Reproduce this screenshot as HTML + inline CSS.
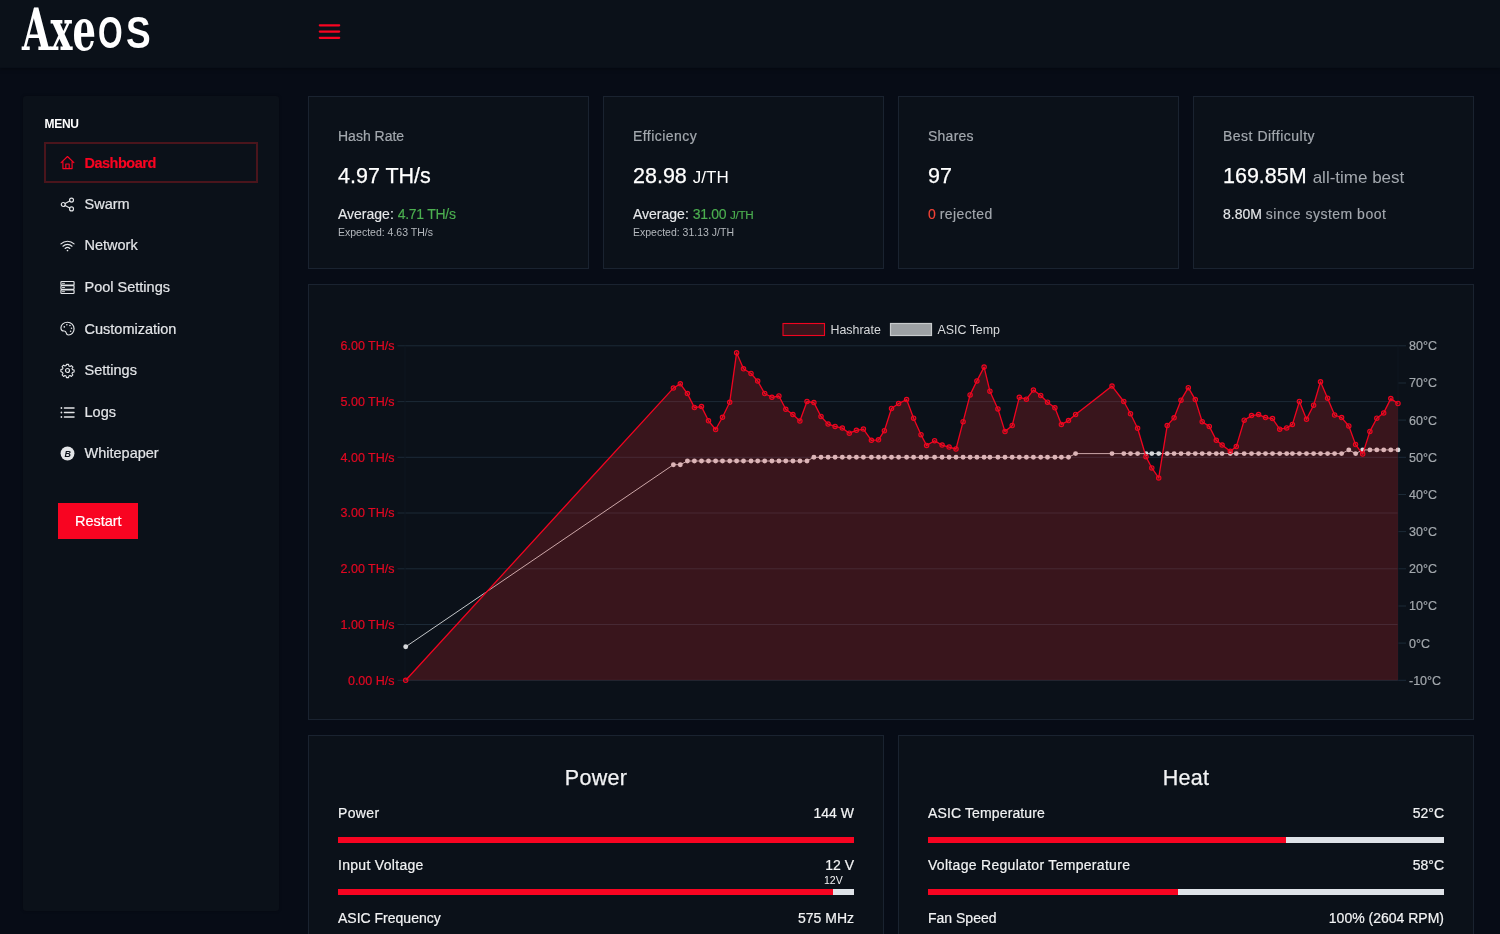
<!DOCTYPE html>
<html lang="en">
<head>
<meta charset="utf-8">
<title>AxeOS</title>
<style>
*{box-sizing:border-box;margin:0;padding:0}
html,body{width:1500px;height:934px;overflow:hidden;background:#070c16;color:#e6e8ea;font-family:"Liberation Sans",sans-serif;}
.abs{position:absolute}
#topbar{position:absolute;left:0;top:0;width:1500px;height:67px;background:#0b1119;box-shadow:0 1px 0 #090f18,0 2px 4px rgba(0,0,0,.35)}
#logo{position:absolute;left:0;top:0;width:200px;height:67px;color:#fff;white-space:nowrap}
#logo span{position:absolute;display:block;transform-origin:0 0;line-height:1}
#logo .axe{left:22px;top:1px;font-family:"DejaVu Serif",serif;font-weight:bold;font-size:58px;transform:scaleX(.635)}
#logo .os{left:98px;top:11px;font-family:"Liberation Sans",sans-serif;font-weight:bold;font-size:44px;transform:scaleX(.72)}
#logo .os2{left:126px;transform:scaleX(.84)}
#burger{position:absolute;left:319px;top:24px;width:21.5px;height:16px}
#burger i{position:absolute;left:0;width:21.5px;height:2.3px;background:#f80421;border-radius:1.2px}
#sidebar{position:absolute;left:23px;top:96px;width:256px;height:814.5px;background:#0b1119;border-radius:3px;box-shadow:0 0 3px rgba(0,0,0,.3)}
.menu-title{position:absolute;left:44.5px;top:116.5px;font-size:12px;line-height:14px;font-weight:bold;color:#fff;letter-spacing:-.3px}
.mi{position:absolute;left:84.500px;height:20px;line-height:20px;color:#e3e5e8;font-size:14.500px;white-space:nowrap;-webkit-text-stroke:.2px currentColor}
.mi.act{color:#f80421;font-weight:bold;letter-spacing:-.5px}
.ic{position:absolute;left:60.300px;width:15px;height:15px;margin-top:.5px;color:#e3e5e8;overflow:visible}
.ic.act{color:#f80421}
.actbox{position:absolute;left:44.300px;top:142px;width:213.300px;height:40.800px;border:2.300px solid #4a151c}
.btn{position:absolute;left:58.400px;top:503px;width:79.800px;height:36px;background:#f80421;color:#fff;font-size:14.500px;text-align:center;line-height:36.500px;-webkit-text-stroke:.2px #fff}
.card{position:absolute;background:#0b1119;border:1px solid #1a2330}
.card .t{position:absolute;left:29px;top:31px;font-size:14px;color:#a3a8ae;white-space:nowrap;-webkit-text-stroke:.2px #a3a8ae}
.card .v{position:absolute;left:29px;top:66.500px;font-size:21.500px;color:#fff;white-space:nowrap;-webkit-text-stroke:.25px #fff}
.card .v small{font-size:17px;-webkit-text-stroke:0}
.card .a{position:absolute;left:29px;top:109px;font-size:14px;color:#e6e8ea;white-space:nowrap;-webkit-text-stroke:.15px currentColor}
.card .e{position:absolute;left:29px;top:129px;font-size:10.5px;color:#b4b8bd;white-space:nowrap}
.g{color:#4caf50;letter-spacing:-.27px}.r{color:#f44336}.m{color:#a3a8ae}

.ct{position:absolute;left:0;width:100%;top:30px;text-align:center;font-size:21.500px;color:#f2f3f4;letter-spacing:.3px;-webkit-text-stroke:.25px #f2f3f4}
.row{position:absolute;left:29px;width:516px;font-size:14px;color:#f2f3f4;white-space:nowrap;-webkit-text-stroke:.2px #f2f3f4}
.row b{position:absolute;right:0;top:0;font-weight:normal}
.bar{position:absolute;left:29px;width:516px;height:6px;background:#dfe3e8}
.bar i{position:absolute;left:0;top:0;height:6px;background:#f80421}
.tiny{position:absolute;font-size:10.5px;color:#f2f3f4}
#wrap{position:absolute;left:0;top:0;width:1500px;height:934px;will-change:transform}
</style>
</head>
<body>
<div id="wrap">
<div id="topbar">
  <div id="logo"><span class="axe">Axe</span><span class="os">O</span><span class="os os2">S</span></div>
  <svg id="burger" viewBox="0 0 30 20" style="position:absolute;left:315px;top:20px;width:30px;height:20px"><path d="M4.8 5.35H24.2M4.8 11.6H24.2M4.8 17.85H24.2" stroke="#f80421" stroke-width="2.2" stroke-linecap="round" fill="none"/></svg>
</div>
<div id="sidebar"></div>
<div class="menu-title">MENU</div>
<div class="actbox"></div>
<svg class="ic act" style="top:154.4px" viewBox="0 0 16 16" fill="none" stroke="currentColor" stroke-width="1.250" stroke-linecap="round" stroke-linejoin="round"><path d="M1.2 8.1 8 1.6l6.8 6.5M3.1 6.9v7.6h9.8V6.9M6.2 14.5V9.6h3.6v4.9" /></svg>
<div class="mi act" style="top:152.5px">Dashboard</div>
<svg class="ic" style="top:196.3px" viewBox="0 0 16 16" fill="none" stroke="currentColor" stroke-width="1.250" stroke-linecap="round" stroke-linejoin="round"><circle cx="12.3" cy="3.3" r="2.1"/><circle cx="3.5" cy="8" r="2.1"/><circle cx="12.3" cy="12.7" r="2.1"/><path d="M5.4 7 10.4 4.3M5.4 9l5 2.7"/></svg>
<div class="mi" style="top:193.5px">Swarm</div>
<svg class="ic" style="top:237.5px" viewBox="0 0 16 16" fill="none" stroke="currentColor" stroke-width="1.250" stroke-linecap="round" stroke-linejoin="round"><path d="M1 6.3a10 10 0 0 1 14 0M3.2 8.8a6.9 6.9 0 0 1 9.6 0M5.5 11.2a3.6 3.6 0 0 1 5 0"/><circle cx="8" cy="13.3" r=".9" fill="currentColor" stroke="none"/></svg>
<div class="mi" style="top:235.0px">Network</div>
<svg class="ic" style="top:279.3px" viewBox="0 0 16 16" fill="none" stroke="currentColor" stroke-width="1.250" stroke-linecap="round" stroke-linejoin="round"><rect x="1" y="1.6" width="14" height="3.9" rx=".8"/><rect x="1" y="6.05" width="14" height="3.9" rx=".8"/><rect x="1" y="10.5" width="14" height="3.9" rx=".8"/><path d="M2.6 3.55h2.2M2.6 8h2.2M2.6 12.45h2.2" stroke-width="1"/></svg>
<div class="mi" style="top:277.0px">Pool Settings</div>
<svg class="ic" style="top:320.7px" viewBox="0 0 16 16" fill="none" stroke="currentColor" stroke-width="1.250" stroke-linecap="round" stroke-linejoin="round"><path d="M8 1.3C4 1.3 1 4 1 7.2c0 2.3 1.6 3.5 3.3 3.5 1.5 0 2 .8 2.300 2 .3 1.300 1.200 2.200 2.600 2.200 3.300 0 5.800-3 5.800-6.700C15 4.300 11.900 1.300 8 1.300z"/><g fill="currentColor" stroke="none"><circle cx="4.600" cy="6.300" r=".85"/><circle cx="7.300" cy="4" r=".85"/><circle cx="10.600" cy="4.800" r=".85"/><circle cx="12.300" cy="7.700" r=".85"/><circle cx="11.300" cy="11" r=".85"/></g></svg>
<div class="mi" style="top:318.6px">Customization</div>
<svg class="ic" style="top:362.5px" viewBox="0 0 16 16" fill="none" stroke="currentColor" stroke-width="1.250" stroke-linecap="round" stroke-linejoin="round"><circle cx="8" cy="8" r="2.1"/><path transform="translate(8 8) scale(.93) translate(-8 -8)" d="M6.800 1h2.400l.4 1.900 1.300.55 1.600-1.050 1.700 1.700-1.050 1.600.55 1.300 1.900.4v2.400l-1.900.4-.55 1.300 1.050 1.600-1.700 1.700-1.600-1.050-1.300.55-.4 1.900H6.800l-.4-1.900-1.300-.55-1.600 1.050-1.700-1.700 1.050-1.600-.55-1.300L.4 9.200V6.800l1.900-.4.550-1.300L1.800 3.500l1.700-1.700 1.600 1.050 1.300-.55z" stroke-linejoin="round"/></svg>
<div class="mi" style="top:359.8px">Settings</div>
<svg class="ic" style="top:404.1px" viewBox="0 0 16 16" fill="none" stroke="currentColor" stroke-width="1.250" stroke-linecap="round" stroke-linejoin="round"><path d="M4.700 3.200H15M4.700 8H15M4.700 12.800H15" stroke-width="1.400"/><g fill="currentColor" stroke="none"><circle cx="1.500" cy="3.200" r=".95"/><circle cx="1.500" cy="8" r=".95"/><circle cx="1.500" cy="12.800" r=".95"/></g></svg>
<div class="mi" style="top:401.5px">Logs</div>
<svg class="ic" style="top:445.1px" viewBox="0 0 16 16"><circle cx="8" cy="8" r="7.400" fill="#e3e5e8"/><text x="8.100" y="11.400" text-anchor="middle" font-family="Liberation Sans, sans-serif" font-weight="bold" font-style="italic" font-size="9.500" fill="#0b1119">B</text></svg>
<div class="mi" style="top:442.7px">Whitepaper</div>
<div class="btn">Restart</div>
<div class="card" style="left:308px;top:96px;width:281px;height:173px">
  <div class="t">Hash Rate</div><div class="v">4.97 TH/s</div>
  <div class="a">Average: <span class="g">4.71 TH/s</span></div><div class="e">Expected: 4.63 TH/s</div>
</div>
<div class="card" style="left:603px;top:96px;width:281px;height:173px">
  <div class="t" style="letter-spacing:.45px">Efficiency</div><div class="v">28.98 <small>J/TH</small></div>
  <div class="a">Average: <span class="g">31.00 <small>J/TH</small></span></div><div class="e">Expected: 31.13 J/TH</div>
</div>
<div class="card" style="left:898px;top:96px;width:281px;height:173px">
  <div class="t" style="letter-spacing:.25px">Shares</div><div class="v">97</div>
  <div class="a"><span class="r">0</span> <span class="m" style="letter-spacing:.4px">rejected</span></div>
</div>
<div class="card" style="left:1193px;top:96px;width:281px;height:173px">
  <div class="t" style="letter-spacing:.5px">Best Difficulty</div><div class="v">169.85M <small class="m">all-time best</small></div>
  <div class="a">8.80M <span class="m" style="letter-spacing:.5px">since system boot</span></div>
</div>
<div class="card" id="chart" style="left:308px;top:284px;width:1166px;height:436px"></div>
<div class="card" id="power" style="left:308px;top:735px;width:576px;height:220px">
  <div class="ct">Power</div>
  <div class="row" style="top:69px"><span style="letter-spacing:.35px">Power</span><b>144 W</b></div>
  <div class="bar" style="top:101px"><i style="width:516px"></i></div>
  <div class="row" style="top:121px"><span style="letter-spacing:.3px">Input Voltage</span><b>12 V</b></div>
  <div class="tiny" style="left:515px;top:138px">12V</div>
  <div class="bar" style="top:153px"><i style="width:495px"></i></div>
  <div class="row" style="top:174px">ASIC Frequency<b>575 MHz</b></div>
</div>
<div class="card" id="heat" style="left:898px;top:735px;width:576px;height:220px">
  <div class="ct">Heat</div>
  <div class="row" style="top:69px"><span style="letter-spacing:.13px">ASIC Temperature</span><b>52°C</b></div>
  <div class="bar" style="top:101px"><i style="width:358px"></i></div>
  <div class="row" style="top:121px"><span style="letter-spacing:.3px">Voltage Regulator Temperature</span><b>58°C</b></div>
  <div class="bar" style="top:153px"><i style="width:250px"></i></div>
  <div class="row" style="top:174px">Fan Speed<b>100% (2604 RPM)</b></div>
</div>
<svg id="chartsvg" width="1500" height="934" viewBox="0 0 1500 934" style="position:absolute;left:0;top:0">
<g stroke="#1c2a37" stroke-width="1" fill="none">
<path d="M397.5 680.3 H1398"/>
<path d="M397.5 624.5 H1398"/>
<path d="M397.5 568.8 H1398"/>
<path d="M397.5 513.0 H1398"/>
<path d="M397.5 457.3 H1398"/>
<path d="M397.5 401.6 H1398"/>
<path d="M397.5 345.8 H1398"/>
<path d="M1398 680.3 H1406"/>
<path d="M1398 643.1 H1406"/>
<path d="M1398 606.0 H1406"/>
<path d="M1398 568.8 H1406"/>
<path d="M1398 531.6 H1406"/>
<path d="M1398 494.5 H1406"/>
<path d="M1398 457.3 H1406"/>
<path d="M1398 420.1 H1406"/>
<path d="M1398 383.0 H1406"/>
<path d="M1398 345.8 H1406"/>
<path d="M405 345.8 V680.3 M1398 345.8 V680.3" stroke="#0f1721"/>
</g>
<path d="M405.7 646.8 L673.4 464.7 L680.3 464.7 L687.4 461.0 L694.4 461.0 L701.5 461.0 L708.5 461.0 L715.6 461.0 L722.5 461.0 L729.7 461.0 L736.6 461.0 L743.5 461.0 L751.0 461.0 L757.7 461.0 L764.7 461.0 L771.9 461.0 L778.9 461.0 L785.8 461.0 L792.9 461.0 L799.9 461.0 L807.0 461.0 L813.9 457.3 L821.0 457.3 L828.1 457.3 L835.1 457.3 L842.3 457.3 L849.3 457.3 L856.4 457.3 L863.4 457.3 L871.4 457.3 L878.5 457.3 L884.4 457.3 L891.5 457.3 L898.6 457.3 L906.6 457.3 L913.6 457.3 L921.0 457.3 L926.6 457.3 L934.6 457.3 L942.1 457.3 L949.1 457.3 L956.0 457.3 L963.1 457.3 L970.1 457.3 L976.9 457.3 L984.1 457.3 L989.9 457.3 L997.9 457.3 L1005.0 457.3 L1012.2 457.3 L1019.3 457.3 L1026.4 457.3 L1033.4 457.3 L1040.7 457.3 L1047.5 457.3 L1054.9 457.3 L1061.4 457.3 L1068.5 457.3 L1075.6 453.6 L1112.0 453.6 L1123.8 453.6 L1130.5 453.6 L1137.6 453.6 L1146.0 453.6 L1151.8 453.6 L1158.7 453.6 L1167.2 453.6 L1174.1 453.6 L1181.0 453.6 L1188.3 453.6 L1195.3 453.6 L1202.2 453.6 L1209.3 453.6 L1216.3 453.6 L1222.1 453.6 L1230.3 453.6 L1236.3 453.6 L1244.2 453.6 L1251.5 453.6 L1258.6 453.6 L1265.5 453.6 L1272.5 453.6 L1279.7 453.6 L1286.7 453.6 L1292.4 453.6 L1299.4 453.6 L1306.5 453.6 L1313.6 453.6 L1320.5 453.6 L1327.6 453.6 L1334.6 453.6 L1341.6 453.6 L1348.8 449.9 L1355.6 453.6 L1362.7 449.9 L1369.9 449.9 L1376.8 449.9 L1383.7 449.9 L1390.8 449.9 L1398.0 449.9" fill="none" stroke="#c3c6c9" stroke-width="1"/>
<g fill="#d6d8db" stroke="none">
<circle cx="405.7" cy="646.8" r="2.45"/>
<circle cx="673.4" cy="464.7" r="2.45"/>
<circle cx="680.3" cy="464.7" r="2.45"/>
<circle cx="687.4" cy="461.0" r="2.45"/>
<circle cx="694.4" cy="461.0" r="2.45"/>
<circle cx="701.5" cy="461.0" r="2.45"/>
<circle cx="708.5" cy="461.0" r="2.45"/>
<circle cx="715.6" cy="461.0" r="2.45"/>
<circle cx="722.5" cy="461.0" r="2.45"/>
<circle cx="729.7" cy="461.0" r="2.45"/>
<circle cx="736.6" cy="461.0" r="2.45"/>
<circle cx="743.5" cy="461.0" r="2.45"/>
<circle cx="751.0" cy="461.0" r="2.45"/>
<circle cx="757.7" cy="461.0" r="2.45"/>
<circle cx="764.7" cy="461.0" r="2.45"/>
<circle cx="771.9" cy="461.0" r="2.45"/>
<circle cx="778.9" cy="461.0" r="2.45"/>
<circle cx="785.8" cy="461.0" r="2.45"/>
<circle cx="792.9" cy="461.0" r="2.45"/>
<circle cx="799.9" cy="461.0" r="2.45"/>
<circle cx="807.0" cy="461.0" r="2.45"/>
<circle cx="813.9" cy="457.3" r="2.45"/>
<circle cx="821.0" cy="457.3" r="2.45"/>
<circle cx="828.1" cy="457.3" r="2.45"/>
<circle cx="835.1" cy="457.3" r="2.45"/>
<circle cx="842.3" cy="457.3" r="2.45"/>
<circle cx="849.3" cy="457.3" r="2.45"/>
<circle cx="856.4" cy="457.3" r="2.45"/>
<circle cx="863.4" cy="457.3" r="2.45"/>
<circle cx="871.4" cy="457.3" r="2.45"/>
<circle cx="878.5" cy="457.3" r="2.45"/>
<circle cx="884.4" cy="457.3" r="2.45"/>
<circle cx="891.5" cy="457.3" r="2.45"/>
<circle cx="898.6" cy="457.3" r="2.45"/>
<circle cx="906.6" cy="457.3" r="2.45"/>
<circle cx="913.6" cy="457.3" r="2.45"/>
<circle cx="921.0" cy="457.3" r="2.45"/>
<circle cx="926.6" cy="457.3" r="2.45"/>
<circle cx="934.6" cy="457.3" r="2.45"/>
<circle cx="942.1" cy="457.3" r="2.45"/>
<circle cx="949.1" cy="457.3" r="2.45"/>
<circle cx="956.0" cy="457.3" r="2.45"/>
<circle cx="963.1" cy="457.3" r="2.45"/>
<circle cx="970.1" cy="457.3" r="2.45"/>
<circle cx="976.9" cy="457.3" r="2.45"/>
<circle cx="984.1" cy="457.3" r="2.45"/>
<circle cx="989.9" cy="457.3" r="2.45"/>
<circle cx="997.9" cy="457.3" r="2.45"/>
<circle cx="1005.0" cy="457.3" r="2.45"/>
<circle cx="1012.2" cy="457.3" r="2.45"/>
<circle cx="1019.3" cy="457.3" r="2.45"/>
<circle cx="1026.4" cy="457.3" r="2.45"/>
<circle cx="1033.4" cy="457.3" r="2.45"/>
<circle cx="1040.7" cy="457.3" r="2.45"/>
<circle cx="1047.5" cy="457.3" r="2.45"/>
<circle cx="1054.9" cy="457.3" r="2.45"/>
<circle cx="1061.4" cy="457.3" r="2.45"/>
<circle cx="1068.5" cy="457.3" r="2.45"/>
<circle cx="1075.6" cy="453.6" r="2.45"/>
<circle cx="1112.0" cy="453.6" r="2.45"/>
<circle cx="1123.8" cy="453.6" r="2.45"/>
<circle cx="1130.5" cy="453.6" r="2.45"/>
<circle cx="1137.6" cy="453.6" r="2.45"/>
<circle cx="1146.0" cy="453.6" r="2.45"/>
<circle cx="1151.8" cy="453.6" r="2.45"/>
<circle cx="1158.7" cy="453.6" r="2.45"/>
<circle cx="1167.2" cy="453.6" r="2.45"/>
<circle cx="1174.1" cy="453.6" r="2.45"/>
<circle cx="1181.0" cy="453.6" r="2.45"/>
<circle cx="1188.3" cy="453.6" r="2.45"/>
<circle cx="1195.3" cy="453.6" r="2.45"/>
<circle cx="1202.2" cy="453.6" r="2.45"/>
<circle cx="1209.3" cy="453.6" r="2.45"/>
<circle cx="1216.3" cy="453.6" r="2.45"/>
<circle cx="1222.1" cy="453.6" r="2.45"/>
<circle cx="1230.3" cy="453.6" r="2.45"/>
<circle cx="1236.3" cy="453.6" r="2.45"/>
<circle cx="1244.2" cy="453.6" r="2.45"/>
<circle cx="1251.5" cy="453.6" r="2.45"/>
<circle cx="1258.6" cy="453.6" r="2.45"/>
<circle cx="1265.5" cy="453.6" r="2.45"/>
<circle cx="1272.5" cy="453.6" r="2.45"/>
<circle cx="1279.7" cy="453.6" r="2.45"/>
<circle cx="1286.7" cy="453.6" r="2.45"/>
<circle cx="1292.4" cy="453.6" r="2.45"/>
<circle cx="1299.4" cy="453.6" r="2.45"/>
<circle cx="1306.5" cy="453.6" r="2.45"/>
<circle cx="1313.6" cy="453.6" r="2.45"/>
<circle cx="1320.5" cy="453.6" r="2.45"/>
<circle cx="1327.6" cy="453.6" r="2.45"/>
<circle cx="1334.6" cy="453.6" r="2.45"/>
<circle cx="1341.6" cy="453.6" r="2.45"/>
<circle cx="1348.8" cy="449.9" r="2.45"/>
<circle cx="1355.6" cy="453.6" r="2.45"/>
<circle cx="1362.7" cy="449.9" r="2.45"/>
<circle cx="1369.9" cy="449.9" r="2.45"/>
<circle cx="1376.8" cy="449.9" r="2.45"/>
<circle cx="1383.7" cy="449.9" r="2.45"/>
<circle cx="1390.8" cy="449.9" r="2.45"/>
<circle cx="1398.0" cy="449.9" r="2.45"/>
</g>
<path d="M405.7 680.3 L673.4 388.1 L680.3 383.8 L687.4 393.6 L694.4 407.5 L701.5 406.6 L708.5 420.8 L715.6 429.5 L722.5 417.3 L729.7 402.3 L736.6 352.8 L743.5 368.8 L751.0 373.5 L757.7 381.1 L764.7 393.5 L771.9 397.3 L778.9 396.0 L785.8 409.3 L792.9 414.6 L799.9 421.0 L807.0 401.5 L813.9 402.6 L821.0 416.5 L828.1 424.1 L835.1 426.4 L842.3 428.1 L849.3 433.2 L856.4 430.3 L863.4 429.1 L871.4 440.3 L878.5 439.8 L884.4 430.7 L891.5 408.5 L898.6 403.5 L906.6 399.6 L913.6 418.2 L921.0 434.7 L926.6 445.4 L934.6 440.7 L942.1 445.1 L949.1 447.1 L956.0 449.0 L963.1 421.7 L970.1 394.9 L976.9 380.9 L984.1 367.1 L989.9 391.2 L997.9 408.9 L1005.0 431.6 L1012.2 425.5 L1019.3 397.3 L1026.4 399.2 L1033.4 390.1 L1040.7 395.5 L1047.5 402.2 L1054.9 407.8 L1061.4 424.4 L1068.5 420.6 L1075.6 414.5 L1112.0 386.1 L1123.8 401.5 L1130.5 413.7 L1137.6 428.3 L1146.0 456.7 L1151.8 467.9 L1158.7 477.9 L1167.2 425.6 L1174.1 417.8 L1181.0 400.2 L1188.3 387.7 L1195.3 399.6 L1202.2 421.7 L1209.3 426.4 L1216.3 440.3 L1222.1 445.1 L1230.3 451.3 L1236.3 446.6 L1244.2 420.2 L1251.5 415.6 L1258.6 414.6 L1265.5 417.6 L1272.5 418.6 L1279.7 429.2 L1286.7 427.9 L1292.4 424.4 L1299.4 401.5 L1306.5 419.3 L1313.6 405.2 L1320.5 381.8 L1327.6 398.2 L1334.6 415.0 L1341.6 417.6 L1348.8 426.0 L1355.6 444.6 L1362.7 454.1 L1369.9 431.4 L1376.8 418.2 L1383.7 412.9 L1390.8 398.6 L1398.0 403.5 L1398.0 680.3 L405.7 680.3 Z" fill="rgba(246,38,42,0.2)" stroke="none"/>
<path d="M405.7 680.3 L673.4 388.1 L680.3 383.8 L687.4 393.6 L694.4 407.5 L701.5 406.6 L708.5 420.8 L715.6 429.5 L722.5 417.3 L729.7 402.3 L736.6 352.8 L743.5 368.8 L751.0 373.5 L757.7 381.1 L764.7 393.5 L771.9 397.3 L778.9 396.0 L785.8 409.3 L792.9 414.6 L799.9 421.0 L807.0 401.5 L813.9 402.6 L821.0 416.5 L828.1 424.1 L835.1 426.4 L842.3 428.1 L849.3 433.2 L856.4 430.3 L863.4 429.1 L871.4 440.3 L878.5 439.8 L884.4 430.7 L891.5 408.5 L898.6 403.5 L906.6 399.6 L913.6 418.2 L921.0 434.7 L926.6 445.4 L934.6 440.7 L942.1 445.1 L949.1 447.1 L956.0 449.0 L963.1 421.7 L970.1 394.9 L976.9 380.9 L984.1 367.1 L989.9 391.2 L997.9 408.9 L1005.0 431.6 L1012.2 425.5 L1019.3 397.3 L1026.4 399.2 L1033.4 390.1 L1040.7 395.5 L1047.5 402.2 L1054.9 407.8 L1061.4 424.4 L1068.5 420.6 L1075.6 414.5 L1112.0 386.1 L1123.8 401.5 L1130.5 413.7 L1137.6 428.3 L1146.0 456.7 L1151.8 467.9 L1158.7 477.9 L1167.2 425.6 L1174.1 417.8 L1181.0 400.2 L1188.3 387.7 L1195.3 399.6 L1202.2 421.7 L1209.3 426.4 L1216.3 440.3 L1222.1 445.1 L1230.3 451.3 L1236.3 446.6 L1244.2 420.2 L1251.5 415.6 L1258.6 414.6 L1265.5 417.6 L1272.5 418.6 L1279.7 429.2 L1286.7 427.9 L1292.4 424.4 L1299.4 401.5 L1306.5 419.3 L1313.6 405.2 L1320.5 381.8 L1327.6 398.2 L1334.6 415.0 L1341.6 417.6 L1348.8 426.0 L1355.6 444.6 L1362.7 454.1 L1369.9 431.4 L1376.8 418.2 L1383.7 412.9 L1390.8 398.6 L1398.0 403.5" fill="none" stroke="#f00420" stroke-width="1.3" stroke-linejoin="round"/>
<g fill="rgba(246,38,42,0.2)" stroke="#f00420" stroke-width="1.1">
<circle cx="405.7" cy="680.3" r="2.2"/>
<circle cx="673.4" cy="388.1" r="2.2"/>
<circle cx="680.3" cy="383.8" r="2.2"/>
<circle cx="687.4" cy="393.6" r="2.2"/>
<circle cx="694.4" cy="407.5" r="2.2"/>
<circle cx="701.5" cy="406.6" r="2.2"/>
<circle cx="708.5" cy="420.8" r="2.2"/>
<circle cx="715.6" cy="429.5" r="2.2"/>
<circle cx="722.5" cy="417.3" r="2.2"/>
<circle cx="729.7" cy="402.3" r="2.2"/>
<circle cx="736.6" cy="352.8" r="2.2"/>
<circle cx="743.5" cy="368.8" r="2.2"/>
<circle cx="751.0" cy="373.5" r="2.2"/>
<circle cx="757.7" cy="381.1" r="2.2"/>
<circle cx="764.7" cy="393.5" r="2.2"/>
<circle cx="771.9" cy="397.3" r="2.2"/>
<circle cx="778.9" cy="396.0" r="2.2"/>
<circle cx="785.8" cy="409.3" r="2.2"/>
<circle cx="792.9" cy="414.6" r="2.2"/>
<circle cx="799.9" cy="421.0" r="2.2"/>
<circle cx="807.0" cy="401.5" r="2.2"/>
<circle cx="813.9" cy="402.6" r="2.2"/>
<circle cx="821.0" cy="416.5" r="2.2"/>
<circle cx="828.1" cy="424.1" r="2.2"/>
<circle cx="835.1" cy="426.4" r="2.2"/>
<circle cx="842.3" cy="428.1" r="2.2"/>
<circle cx="849.3" cy="433.2" r="2.2"/>
<circle cx="856.4" cy="430.3" r="2.2"/>
<circle cx="863.4" cy="429.1" r="2.2"/>
<circle cx="871.4" cy="440.3" r="2.2"/>
<circle cx="878.5" cy="439.8" r="2.2"/>
<circle cx="884.4" cy="430.7" r="2.2"/>
<circle cx="891.5" cy="408.5" r="2.2"/>
<circle cx="898.6" cy="403.5" r="2.2"/>
<circle cx="906.6" cy="399.6" r="2.2"/>
<circle cx="913.6" cy="418.2" r="2.2"/>
<circle cx="921.0" cy="434.7" r="2.2"/>
<circle cx="926.6" cy="445.4" r="2.2"/>
<circle cx="934.6" cy="440.7" r="2.2"/>
<circle cx="942.1" cy="445.1" r="2.2"/>
<circle cx="949.1" cy="447.1" r="2.2"/>
<circle cx="956.0" cy="449.0" r="2.2"/>
<circle cx="963.1" cy="421.7" r="2.2"/>
<circle cx="970.1" cy="394.9" r="2.2"/>
<circle cx="976.9" cy="380.9" r="2.2"/>
<circle cx="984.1" cy="367.1" r="2.2"/>
<circle cx="989.9" cy="391.2" r="2.2"/>
<circle cx="997.9" cy="408.9" r="2.2"/>
<circle cx="1005.0" cy="431.6" r="2.2"/>
<circle cx="1012.2" cy="425.5" r="2.2"/>
<circle cx="1019.3" cy="397.3" r="2.2"/>
<circle cx="1026.4" cy="399.2" r="2.2"/>
<circle cx="1033.4" cy="390.1" r="2.2"/>
<circle cx="1040.7" cy="395.5" r="2.2"/>
<circle cx="1047.5" cy="402.2" r="2.2"/>
<circle cx="1054.9" cy="407.8" r="2.2"/>
<circle cx="1061.4" cy="424.4" r="2.2"/>
<circle cx="1068.5" cy="420.6" r="2.2"/>
<circle cx="1075.6" cy="414.5" r="2.2"/>
<circle cx="1112.0" cy="386.1" r="2.2"/>
<circle cx="1123.8" cy="401.5" r="2.2"/>
<circle cx="1130.5" cy="413.7" r="2.2"/>
<circle cx="1137.6" cy="428.3" r="2.2"/>
<circle cx="1146.0" cy="456.7" r="2.2"/>
<circle cx="1151.8" cy="467.9" r="2.2"/>
<circle cx="1158.7" cy="477.9" r="2.2"/>
<circle cx="1167.2" cy="425.6" r="2.2"/>
<circle cx="1174.1" cy="417.8" r="2.2"/>
<circle cx="1181.0" cy="400.2" r="2.2"/>
<circle cx="1188.3" cy="387.7" r="2.2"/>
<circle cx="1195.3" cy="399.6" r="2.2"/>
<circle cx="1202.2" cy="421.7" r="2.2"/>
<circle cx="1209.3" cy="426.4" r="2.2"/>
<circle cx="1216.3" cy="440.3" r="2.2"/>
<circle cx="1222.1" cy="445.1" r="2.2"/>
<circle cx="1230.3" cy="451.3" r="2.2"/>
<circle cx="1236.3" cy="446.6" r="2.2"/>
<circle cx="1244.2" cy="420.2" r="2.2"/>
<circle cx="1251.5" cy="415.6" r="2.2"/>
<circle cx="1258.6" cy="414.6" r="2.2"/>
<circle cx="1265.5" cy="417.6" r="2.2"/>
<circle cx="1272.5" cy="418.6" r="2.2"/>
<circle cx="1279.7" cy="429.2" r="2.2"/>
<circle cx="1286.7" cy="427.9" r="2.2"/>
<circle cx="1292.4" cy="424.4" r="2.2"/>
<circle cx="1299.4" cy="401.5" r="2.2"/>
<circle cx="1306.5" cy="419.3" r="2.2"/>
<circle cx="1313.6" cy="405.2" r="2.2"/>
<circle cx="1320.5" cy="381.8" r="2.2"/>
<circle cx="1327.6" cy="398.2" r="2.2"/>
<circle cx="1334.6" cy="415.0" r="2.2"/>
<circle cx="1341.6" cy="417.6" r="2.2"/>
<circle cx="1348.8" cy="426.0" r="2.2"/>
<circle cx="1355.6" cy="444.6" r="2.2"/>
<circle cx="1362.7" cy="454.1" r="2.2"/>
<circle cx="1369.9" cy="431.4" r="2.2"/>
<circle cx="1376.8" cy="418.2" r="2.2"/>
<circle cx="1383.7" cy="412.9" r="2.2"/>
<circle cx="1390.8" cy="398.6" r="2.2"/>
<circle cx="1398.0" cy="403.5" r="2.2"/>
</g>
<g font-family="Liberation Sans, sans-serif" font-size="12.5" fill="#e30822" stroke="#e30822" stroke-width=".2" text-anchor="end">
<text x="394.5" y="684.7">0.00 H/s</text>
<text x="394.5" y="628.9">1.00 TH/s</text>
<text x="394.5" y="573.2">2.00 TH/s</text>
<text x="394.5" y="517.4">3.00 TH/s</text>
<text x="394.5" y="461.7">4.00 TH/s</text>
<text x="394.5" y="405.9">5.00 TH/s</text>
<text x="394.5" y="350.2">6.00 TH/s</text>
</g>
<g font-family="Liberation Sans, sans-serif" font-size="12.5" fill="#a3a8ad" stroke="#a3a8ad" stroke-width=".2">
<text x="1409" y="684.7">-10°C</text>
<text x="1409" y="647.5">0°C</text>
<text x="1409" y="610.4">10°C</text>
<text x="1409" y="573.2">20°C</text>
<text x="1409" y="536.0">30°C</text>
<text x="1409" y="498.9">40°C</text>
<text x="1409" y="461.7">50°C</text>
<text x="1409" y="424.5">60°C</text>
<text x="1409" y="387.4">70°C</text>
<text x="1409" y="350.2">80°C</text>
</g>
<rect x="783" y="323.5" width="41.5" height="12" fill="rgba(246,38,42,0.2)" stroke="#f00420" stroke-width="1.1"/>
<rect x="890.5" y="323.5" width="41" height="12" fill="#9da1a4" stroke="#c8cbcd" stroke-width="1.2"/>
<g font-family="Liberation Sans, sans-serif" font-size="12.4" fill="#d8dadc"><text x="830.5" y="333.7">Hashrate</text><text x="937.5" y="333.7">ASIC Temp</text></g>
</svg>
</div>
</body>
</html>
